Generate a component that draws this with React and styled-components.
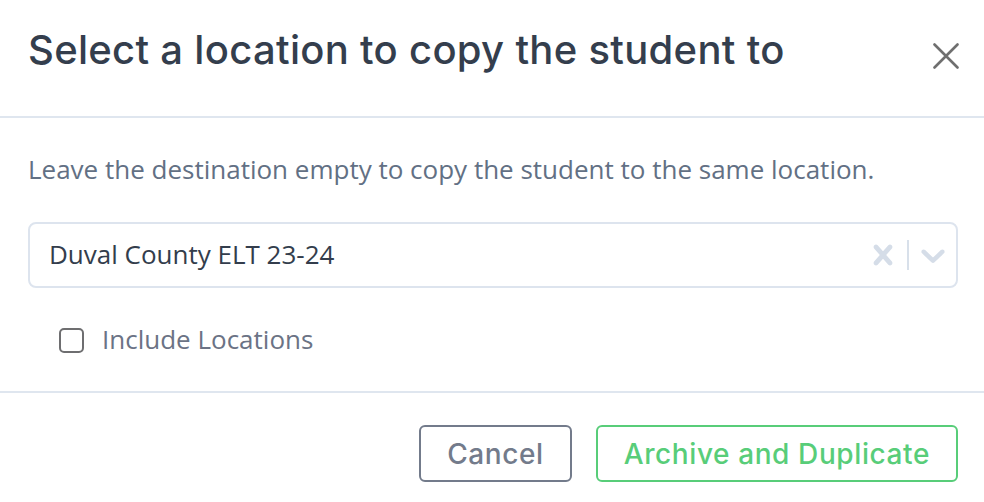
import React, { useState } from "react";
import styled, { createGlobalStyle } from "styled-components";

const GlobalStyle = createGlobalStyle`
  html, body {
    margin: 0;
    padding: 0;
    background: #ffffff;
  }
  * {
    box-sizing: border-box;
  }
`;

const Modal = styled.div`
  width: 984px;
  height: 502px;
  background: #ffffff;
  display: flex;
  flex-direction: column;
  font-family: "Open Sans", "Noto Sans", sans-serif;
`;

const Header = styled.div`
  display: flex;
  align-items: flex-start;
  justify-content: space-between;
  height: 118px;
  padding: 26px 25px 0 28px;
  border-bottom: 2px solid #dfe6ef;
`;

const Title = styled.h1`
  margin: 0;
  font-family: "Inter", "Noto Sans", sans-serif;
  font-weight: 500;
  font-size: 40px;
  line-height: 48px;
  letter-spacing: 0.3px;
  color: #343e4d;
`;

const CloseButton = styled.button`
  margin-top: 17px;
  width: 26px;
  height: 26px;
  padding: 0;
  border: none;
  background: none;
  cursor: pointer;
  display: flex;
`;

const Body = styled.div`
  padding: 33px 26px 33px 28px;
`;

const Description = styled.p`
  margin: 0;
  font-size: 26px;
  line-height: 36px;
  color: #627084;
`;

const SelectBox = styled.div`
  margin-top: 35px;
  height: 66px;
  display: flex;
  align-items: center;
  padding: 0 3px 0 19px;
  border: 2px solid #dde4ee;
  border-radius: 8px;
`;

const SelectValue = styled.div`
  flex: 1;
  font-size: 26px;
  line-height: 36px;
  padding-bottom: 2px;
  color: #333d4c;
`;

const Indicators = styled.div`
  display: flex;
  align-items: center;
`;

const Separator = styled.span`
  width: 2px;
  height: 30px;
  margin: 0 4px;
  background: #d8e0ea;
`;

const IndicatorIcon = styled.svg`
  width: 40px;
  height: 40px;
  fill: #d5dde8;
`;

const CheckRow = styled.label`
  margin-top: 34px;
  display: flex;
  align-items: center;
  gap: 18px;
  padding-left: 31px;
  height: 36px;
  cursor: pointer;
`;

const CheckBox = styled.span`
  width: 25px;
  height: 25px;
  border: 2px solid #6e6e70;
  border-radius: 5px;
  background: ${(p) => (p.$checked ? "#6e6e70" : "#ffffff")};
`;

const CheckLabel = styled.span`
  font-size: 26px;
  line-height: 36px;
  padding-bottom: 2px;
  color: #6b7385;
`;

const Footer = styled.div`
  display: flex;
  justify-content: flex-end;
  gap: 24px;
  padding: 32px 26px 20px 28px;
  border-top: 2px solid #dfe6ef;
`;

const Button = styled.button`
  height: 57px;
  padding: 0 26px;
  border: 2px solid ${(p) => p.$color};
  border-radius: 6px;
  background: #ffffff;
  color: ${(p) => p.$color};
  font-family: "Inter", "Noto Sans", sans-serif;
  font-weight: 500;
  font-size: 28px;
  letter-spacing: 0.6px;
  cursor: pointer;
`;

const App = () => {
  const [checked, setChecked] = useState(false);

  return (
    <>
      <GlobalStyle />
      <Modal>
        <Header>
          <Title>Select a location to copy the student to</Title>
          <CloseButton aria-label="Close">
            <svg width="26" height="26" viewBox="0 0 26 26">
              <path
                d="M1.5 1.5 L24.5 24.5 M24.5 1.5 L1.5 24.5"
                stroke="#6f6f6f"
                strokeWidth="2.6"
                strokeLinecap="round"
              />
            </svg>
          </CloseButton>
        </Header>
        <Body>
          <Description>
            Leave the destination empty to copy the student to the same location.
          </Description>
          <SelectBox>
            <SelectValue>Duval County ELT 23-24</SelectValue>
            <Indicators>
              <IndicatorIcon viewBox="0 0 20 20">
                <path d="M14.348 14.849c-0.469 0.469-1.229 0.469-1.697 0l-2.651-3.030-2.651 3.029c-0.469 0.469-1.229 0.469-1.697 0-0.469-0.469-0.469-1.229 0-1.697l2.758-3.15-2.759-3.152c-0.469-0.469-0.469-1.228 0-1.697s1.228-0.469 1.697 0l2.652 3.031 2.651-3.031c0.469-0.469 1.228-0.469 1.697 0s0.469 1.229 0 1.697l-2.758 3.152 2.758 3.15c0.469 0.469 0.469 1.229 0 1.698z" />
              </IndicatorIcon>
              <Separator />
              <IndicatorIcon viewBox="0 0 20 20">
                <path d="M4.516 7.548c0.436-0.446 1.043-0.481 1.576 0l3.908 3.747 3.908-3.747c0.533-0.481 1.141-0.446 1.574 0 0.436 0.445 0.408 1.197 0 1.615-0.406 0.418-4.695 4.502-4.695 4.502-0.217 0.223-0.502 0.335-0.787 0.335s-0.57-0.112-0.789-0.335c0 0-4.287-4.084-4.695-4.502s-0.436-1.17 0-1.615z" />
              </IndicatorIcon>
            </Indicators>
          </SelectBox>
          <CheckRow onClick={() => setChecked(!checked)}>
            <CheckBox $checked={checked} />
            <CheckLabel>Include Locations</CheckLabel>
          </CheckRow>
        </Body>
        <Footer>
          <Button $color="#737b8b">Cancel</Button>
          <Button $color="#58cd79">Archive and Duplicate</Button>
        </Footer>
      </Modal>
    </>
  );
};

export default App;
